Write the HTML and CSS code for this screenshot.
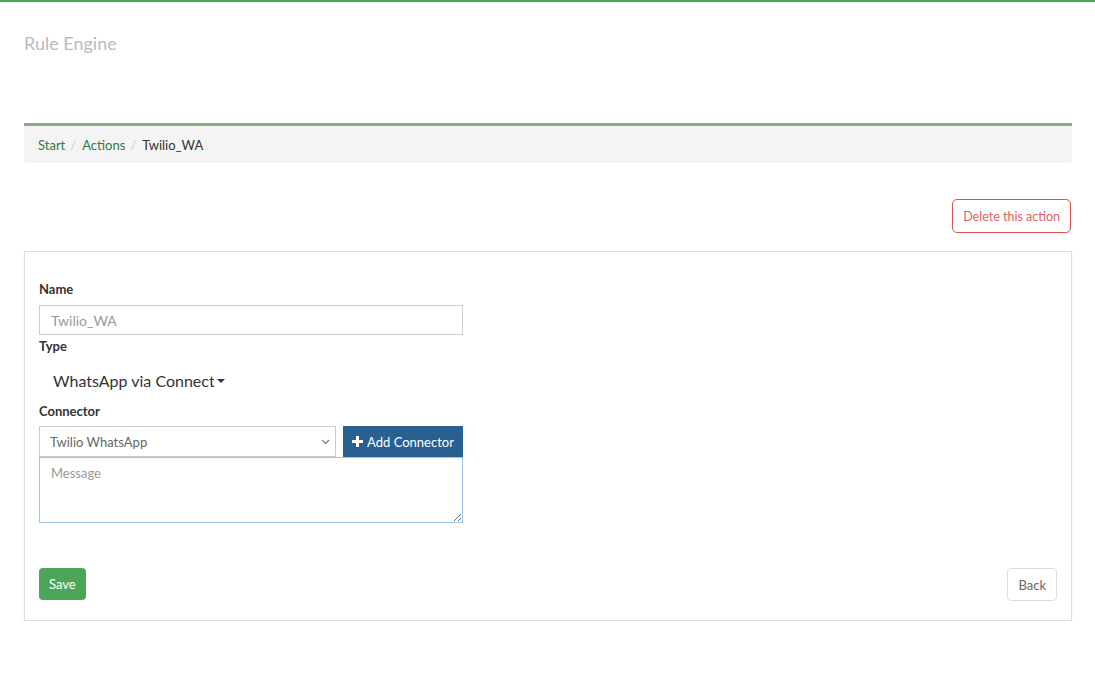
FILE: index.html
```html
<!DOCTYPE html>
<html lang="en">
<head>
    <meta charset="UTF-8">
    <meta name="viewport" content="width=device-width, initial-scale=1.0">
    <title>Rule Engine</title>
    <link rel="stylesheet" href="styles.css">
</head>
<body>

    <div class="topbar"></div>

    <div class="container">
        <h1 class="brand">Rule Engine</h1>

        <ol class="breadcrumb">
            <li><a href="#">Start</a></li>
            <li><a href="#">Actions</a></li>
            <li class="active">Twilio_WA</li>
        </ol>

        <div class="toolbar">
            <button class="btn btn-delete" type="button">Delete this action</button>
        </div>

        <div class="panel">
            <form id="actionForm">
                <div class="form-col">
                    <label for="name">Name</label>
                    <input type="text" id="name" name="name" placeholder="Twilio_WA">

                    <label class="label-type">Type</label>
                    <div class="type-select">
                        <span class="type-text">WhatsApp via Connector</span>
                        <span class="caret"></span>
                    </div>

                    <label for="connector" class="label-connector">Connector</label>
                    <div class="connector-row">
                        <div class="select-wrap">
                            <select id="connector" name="connector">
                                <option>Twilio WhatsApp</option>
                            </select>
                            <svg class="chevron" width="9" height="6" viewBox="0 0 9 6"><path d="M1 1l3.5 3.5L8 1" fill="none" stroke="#777" stroke-width="1.1"/></svg>
                        </div>
                        <button class="btn btn-add" type="button">
                            <svg width="11" height="11" viewBox="0 0 11 11"><path d="M4 0h3v4h4v3H7v4H4V7H0V4h4z" fill="#fff"/></svg>
                            Add Connector
                        </button>
                    </div>
                    <textarea id="message" name="message" placeholder="Message"></textarea>
                </div>

                <div class="form-actions">
                    <button class="btn btn-save" type="submit">Save</button>
                    <button class="btn btn-back" type="button">Back</button>
                </div>
            </form>
        </div>
    </div>

</body>
</html>
```

FILE: styles.css
```css
body {
    font-family: Lato, "Open Sans", sans-serif;
    font-size: 13px;
    color: #333;
    background-color: #fff;
    margin: 0;
    padding: 0;
}

.topbar {
    height: 2px;
    background-color: #4ca65a;
}

.container {
    padding: 0 23px 0 24px;
}

.brand {
    margin: 0;
    padding-top: 30px;
    height: 89px;
    box-sizing: border-box;
    font-size: 18px;
    font-weight: normal;
    color: #bbb;
}

.breadcrumb {
    list-style: none;
    margin: 32px 0 0;
    padding: 1px 14px 0;
    height: 36px;
    box-sizing: content-box;
    display: flex;
    align-items: center;
    background-color: #f4f4f4;
    border-top: 3px solid #89ad89;
    border-radius: 0 0 4px 4px;
    font-size: 13px;
}

.breadcrumb li + li::before {
    content: "/";
    color: #ccc;
    padding: 0 6px 0 5px;
}

.breadcrumb a {
    color: #2f7a46;
    text-decoration: none;
}

.breadcrumb .active {
    color: #333;
}

.toolbar {
    display: flex;
    justify-content: flex-end;
    padding: 36px 1px 18px 0;
}

.btn {
    font-family: Lato, "Open Sans", sans-serif;
    font-size: 13px;
    cursor: pointer;
    border-radius: 4px;
}

.btn-delete {
    height: 34px;
    padding: 0 10px;
    font-size: 12.5px;
    background-color: #fff;
    color: #dc6060;
    border: 1px solid #d9534f;
    border-radius: 5px;
}

.panel {
    border: 1px solid #ddd;
    box-shadow: 0 1px 2px rgba(0, 0, 0, 0.08);
    padding: 29px 14px 19px;
}

.form-col {
    width: 424px;
    display: flex;
    flex-direction: column;
}

label {
    font-weight: bold;
    font-size: 13px;
    color: #333;
    margin-bottom: 8px;
}

.label-connector {
    margin-bottom: 7px;
}

input[type="text"] {
    height: 30px;
    box-sizing: border-box;
    padding: 0 11px;
    border: 1px solid #ccc;
    font-family: Lato, "Open Sans", sans-serif;
    font-size: 14px;
    margin-bottom: 3px;
}

input::placeholder,
textarea::placeholder {
    color: #999;
}

.type-select {
    display: flex;
    align-items: center;
    padding: 9px 0 13px 14px;
    font-size: 16px;
    color: #333;
}

.type-text {
    width: 161px;
    overflow: hidden;
    white-space: nowrap;
}

.caret {
    width: 0;
    height: 0;
    margin-left: 3px;
    border-top: 4px solid #333;
    border-left: 4px solid transparent;
    border-right: 4px solid transparent;
}

.connector-row {
    display: flex;
    gap: 7px;
}

.select-wrap {
    position: relative;
    flex: 1;
}

select {
    width: 100%;
    height: 31px;
    padding: 0 10px;
    border: 1px solid #ccc;
    background-color: #fff;
    font-family: Lato, "Open Sans", sans-serif;
    font-size: 13px;
    color: #666;
    appearance: none;
    -webkit-appearance: none;
    border-radius: 0;
}

.chevron {
    position: absolute;
    right: 6px;
    top: 13px;
}

.btn-add {
    width: 120px;
    height: 31px;
    background-color: #286090;
    color: #fff;
    border: none;
    border-radius: 0;
    display: flex;
    align-items: center;
    justify-content: center;
    gap: 4px;
    padding: 0;
}

textarea {
    height: 66px;
    box-sizing: border-box;
    padding: 7px 11px;
    border: 1px solid #9fc3e6;
    font-family: Lato, "Open Sans", sans-serif;
    font-size: 13px;
}

.form-actions {
    display: flex;
    justify-content: space-between;
    align-items: flex-start;
    margin-top: 45px;
}

.btn-save {
    height: 32px;
    padding: 0 10px;
    background-color: #4ca65a;
    color: #fff;
    border: none;
}

.btn-back {
    height: 33px;
    padding: 0 10px;
    background-color: #fff;
    color: #666;
    border: 1px solid #ddd;
}
```
